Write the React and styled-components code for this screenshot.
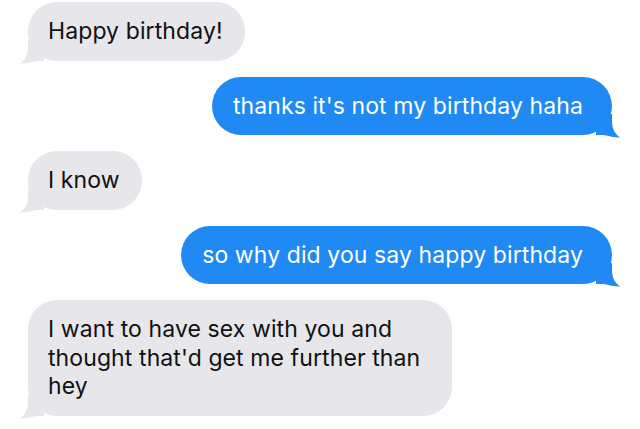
import React from "react";
import styled, { createGlobalStyle } from "styled-components";

const GlobalStyle = createGlobalStyle`
  html, body {
    margin: 0;
    padding: 0;
    background: #ffffff;
  }
  body {
    font-family: Inter, "Liberation Sans", sans-serif;
    -webkit-font-smoothing: antialiased;
  }
`;

const Thread = styled.div`
  width: 640px;
  height: 429px;
  box-sizing: border-box;
  padding: 2px 28px 0 28px;
  display: flex;
  flex-direction: column;
  gap: 16px;
  overflow: hidden;
`;

const Row = styled.div`
  display: flex;
  justify-content: ${props => (props.$mine ? "flex-end" : "flex-start")};
`;

const Bubble = styled.div`
  position: relative;
  box-sizing: border-box;
  max-width: ${props => props.$max || "none"};
  padding: ${props => (props.$mine ? "15px 29px 15px 21px" : "15px 22px 15px 20px")};
  border-radius: 29px;
  background: ${props => (props.$mine ? "#2189f3" : "#e6e6eb")};
  color: ${props => (props.$mine ? "#ffffff" : "#111111")};
  font-size: 23px;
  line-height: 28.5px;
  letter-spacing: 0.1px;
`;

const Text = styled.span`
  position: relative;
  z-index: 1;
`;

const Tail = styled.svg`
  position: absolute;
  bottom: -3px;
  width: 26px;
  height: 24px;
  ${props =>
    props.$mine
      ? "right: -10px; transform: scaleX(-1);"
      : "left: -10px;"}
`;

const BubbleTail = ({ mine }) => (
  <Tail $mine={mine} viewBox="0 0 26 24" aria-hidden="true">
    <path
      d="M10 0 L26 0 L26 21 L19 21 C15 21.5 9 23.6 1.5 23.6 C6 21 10 16 10 7 Z"
      fill={mine ? "#2189f3" : "#e6e6eb"}
    />
  </Tail>
);

const Message = ({ mine, max, children }) => (
  <Row $mine={mine}>
    <Bubble $mine={mine} $max={max}>
      <BubbleTail mine={mine} />
      <Text>{children}</Text>
    </Bubble>
  </Row>
);

const App = () => {
  return (
    <>
      <GlobalStyle />
      <Thread>
        <Message>Happy birthday!</Message>
        <Message mine>thanks it's not my birthday haha</Message>
        <Message>I know</Message>
        <Message mine>so why did you say happy birthday</Message>
        <Message max="424px">
          I want to have sex with you and thought that'd get me further than hey
        </Message>
      </Thread>
    </>
  );
};

export default App;
